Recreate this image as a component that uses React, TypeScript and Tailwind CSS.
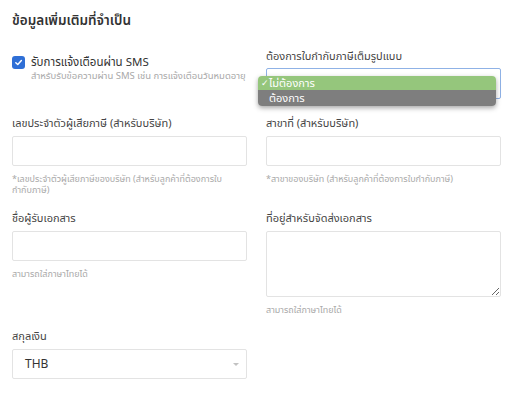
import { ChangeEvent } from "react";

const font = { fontFamily: '"Noto Sans", "Noto Sans Thai", "Liberation Sans", sans-serif' };

function Field({ label, helper, children }: { label: string; helper?: string; children: React.ReactNode }) {
  return (
    <div className="flex flex-col">
      <label className="text-[11px] leading-[14px] text-[#444] mb-[6px]">{label}</label>
      {children}
      {helper && <p className="mt-[7px] text-[9px] leading-[11px] text-[#a9a9a9] pr-2">{helper}</p>}
    </div>
  );
}

function TextInput() {
  return <input className="h-[30px] w-full border border-[#e3e3e3] rounded-[2px] bg-white px-2 text-[12px] outline-none" />;
}

export default function App() {
  const noop = (_e: ChangeEvent<HTMLTextAreaElement>) => {};

  return (
    <div className="w-[516px] h-[400px] bg-white pl-3 pr-[15px] pt-[11px] overflow-hidden" style={font}>
      {/* หัวข้อ */}
      <h2 className="text-[13.5px] leading-[18px] font-semibold text-[#333]">ข้อมูลเพิ่มเติมที่จำเป็น</h2>

      <div className="grid grid-cols-2 gap-x-[19px] mt-[20px]">
        {/* SMS */}
        <div className="flex items-start gap-[6px] pt-[6px]">
          <span className="mt-px w-[13px] h-[13px] rounded-[3px] bg-[#2f6fd6] flex items-center justify-center shrink-0">
            <svg width="9" height="9" viewBox="0 0 10 10" fill="none">
              <path d="M2 5.2 L4.2 7.3 L8.2 2.8" stroke="white" strokeWidth="1.6" strokeLinecap="round" strokeLinejoin="round" />
            </svg>
          </span>
          <div className="flex flex-col">
            <span className="text-[11.5px] leading-[14px] text-[#333]">รับการแจ้งเตือนผ่าน SMS</span>
            <span className="text-[9.5px] leading-[13px] text-[#a9a9a9]">สำหรับรับข้อความผ่าน SMS เช่น การแจ้งเตือนวันหมดอายุ</span>
          </div>
        </div>

        {/* ใบกำกับภาษีเต็มรูปแบบ */}
        <div className="flex flex-col">
          <label className="text-[11px] leading-[14px] text-[#444] mb-[5px]">ต้องการใบกำกับภาษีเต็มรูปแบบ</label>
          <div className="relative">
            <div className="h-[31px] w-full border border-[#8fb2e6] rounded-[2px] bg-white" />
            <div className="absolute left-[-8px] top-[8px] w-[238px] rounded-[4px] overflow-hidden shadow-[0_2px_5px_rgba(0,0,0,0.35)] text-[11px] leading-[14px] text-white">
              <div className="bg-[#95c67c] px-[3px] h-[14px] flex items-center">
                <span className="w-[8px] text-[9px]">✓</span>
                <span>ไม่ต้องการ</span>
              </div>
              <div className="bg-[#7e7e7e] pl-[11px] h-[16px] flex items-center">ต้องการ</div>
            </div>
          </div>
        </div>

        {/* เลขประจำตัวผู้เสียภาษี */}
        <div className="mt-[17px]">
          <Field label="เลขประจำตัวผู้เสียภาษี (สำหรับบริษัท)" helper="*เลขประจำตัวผู้เสียภาษีของบริษัท (สำหรับลูกค้าที่ต้องการใบกำกับภาษี)">
            <TextInput />
          </Field>
        </div>
        <div className="mt-[17px]">
          <Field label="สาขาที่ (สำหรับบริษัท)" helper="*สาขาของบริษัท (สำหรับลูกค้าที่ต้องการใบกำกับภาษี)">
            <TextInput />
          </Field>
        </div>

        {/* ผู้รับเอกสาร */}
        <div className="mt-[16px]">
          <Field label="ชื่อผู้รับเอกสาร" helper="สามารถใส่ภาษาไทยได้">
            <TextInput />
          </Field>
        </div>
        <div className="mt-[16px]">
          <Field label="ที่อยู่สำหรับจัดส่งเอกสาร" helper="สามารถใส่ภาษาไทยได้">
            <textarea
              onChange={noop}
              className="h-[66px] w-full border border-[#e3e3e3] rounded-[2px] bg-white px-2 text-[12px] outline-none block"
            />
          </Field>
        </div>

        {/* สกุลเงิน */}
        <div className="mt-[14px]">
          <Field label="สกุลเงิน">
            <div className="h-[30px] w-full border border-[#e3e3e3] rounded-[2px] bg-white flex items-center justify-between pl-3 pr-[7px]">
              <span className="text-[12px] text-[#333]">THB</span>
              <svg width="6" height="3" viewBox="0 0 6 3">
                <path d="M0 0 H6 L3 3 Z" fill="#c2c2c2" />
              </svg>
            </div>
          </Field>
        </div>
      </div>
    </div>
  );
}
